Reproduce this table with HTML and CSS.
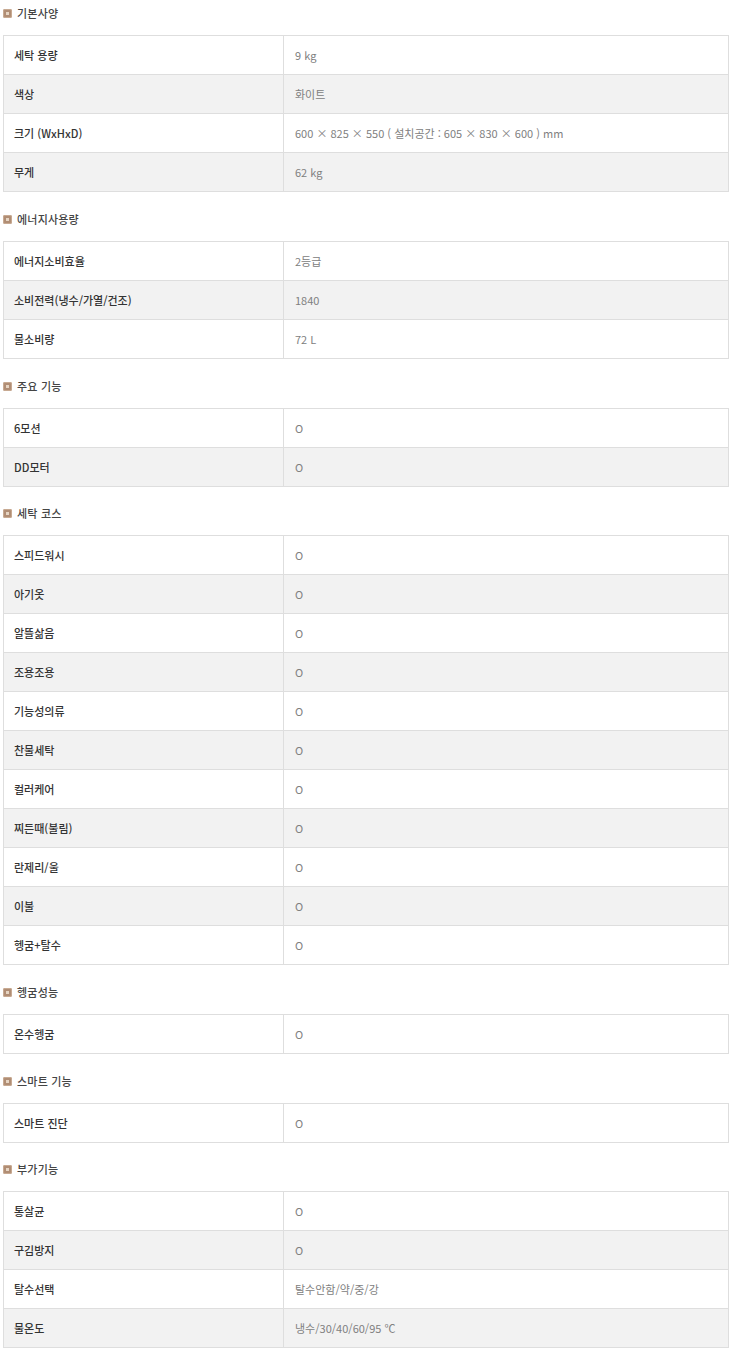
FILE: index.html
```html
<!DOCTYPE html>
<html lang="ko">
<head>
<meta charset="utf-8">
<link rel="stylesheet" href="styles.css">
</head>
<body>
<div class="page">
  <section class="spec">
    <h3 class="spec-title"><span class="bullet"></span>기본사양</h3>
    <table class="spec-table">
      <tr><th>세탁 용량</th><td>9 kg</td></tr>
      <tr><th>색상</th><td>화이트</td></tr>
      <tr><th>크기 (WxHxD)</th><td>600 × 825 × 550 ( 설치공간 : 605 × 830 × 600 ) mm</td></tr>
      <tr><th>무게</th><td>62 kg</td></tr>
    </table>
  </section>
  <section class="spec">
    <h3 class="spec-title"><span class="bullet"></span>에너지사용량</h3>
    <table class="spec-table">
      <tr><th>에너지소비효율</th><td>2등급</td></tr>
      <tr><th>소비전력(냉수/가열/건조)</th><td>1840</td></tr>
      <tr><th>물소비량</th><td>72 L</td></tr>
    </table>
  </section>
  <section class="spec">
    <h3 class="spec-title"><span class="bullet"></span>주요 기능</h3>
    <table class="spec-table">
      <tr><th>6모션</th><td>O</td></tr>
      <tr><th>DD모터</th><td>O</td></tr>
    </table>
  </section>
  <section class="spec">
    <h3 class="spec-title"><span class="bullet"></span>세탁 코스</h3>
    <table class="spec-table">
      <tr><th>스피드워시</th><td>O</td></tr>
      <tr><th>아기옷</th><td>O</td></tr>
      <tr><th>알뜰삶음</th><td>O</td></tr>
      <tr><th>조용조용</th><td>O</td></tr>
      <tr><th>기능성의류</th><td>O</td></tr>
      <tr><th>찬물세탁</th><td>O</td></tr>
      <tr><th>컬러케어</th><td>O</td></tr>
      <tr><th>찌든때(불림)</th><td>O</td></tr>
      <tr><th>란제리/울</th><td>O</td></tr>
      <tr><th>이불</th><td>O</td></tr>
      <tr><th>헹굼+탈수</th><td>O</td></tr>
    </table>
  </section>
  <section class="spec">
    <h3 class="spec-title"><span class="bullet"></span>헹굼성능</h3>
    <table class="spec-table">
      <tr><th>온수헹굼</th><td>O</td></tr>
    </table>
  </section>
  <section class="spec">
    <h3 class="spec-title"><span class="bullet"></span>스마트 기능</h3>
    <table class="spec-table">
      <tr><th>스마트 진단</th><td>O</td></tr>
    </table>
  </section>
  <section class="spec">
    <h3 class="spec-title"><span class="bullet"></span>부가기능</h3>
    <table class="spec-table">
      <tr><th>통살균</th><td>O</td></tr>
      <tr><th>구김방지</th><td>O</td></tr>
      <tr><th>탈수선택</th><td>탈수안함/약/중/강</td></tr>
      <tr><th>물온도</th><td>냉수/30/40/60/95 ℃</td></tr>
    </table>
  </section>
</div>
</body>
</html>
```

FILE: styles.css
```css
html, body {
  margin: 0;
  padding: 0;
  background: #ffffff;
}

.page {
  padding: 0 1px 0 3px;
  font-family: "Noto Sans CJK KR", "Noto Sans", sans-serif;
}

.spec {
  margin-bottom: 14px;
}

.spec:nth-child(3n) {
  margin-bottom: 13px;
}

.spec-title {
  display: flex;
  align-items: center;
  height: 26px;
  margin: 0 0 9px 0;
  font-size: 11px;
  font-weight: 500;
  color: #444444;
  letter-spacing: 0.2px;
}

.bullet {
  display: inline-block;
  width: 9px;
  height: 9px;
  margin-right: 5px;
  border-radius: 2px;
  background: #b08d74;
  box-shadow: inset 0 0 0 1px #c8aa92;
  position: relative;
}

.bullet::after {
  content: "";
  position: absolute;
  left: 3px;
  top: 3px;
  width: 3px;
  height: 3px;
  background: #e6d4c2;
}

.spec-table {
  width: 100%;
  border-collapse: collapse;
  table-layout: fixed;
}

.spec-table tr {
  height: 39px;
}

.spec-table tr:nth-child(even) {
  background: #f2f2f2;
}

.spec-table th,
.spec-table td {
  border: 1px solid #dedede;
  padding: 0 0 0 10px;
  text-align: left;
  vertical-align: middle;
}

.spec-table th {
  width: 269px;
  font-size: 11px;
  font-weight: 500;
  color: #333333;
}

.spec-table td {
  padding-left: 11px;
  font-size: 11px;
  font-weight: 400;
  color: #808080;
}
```
